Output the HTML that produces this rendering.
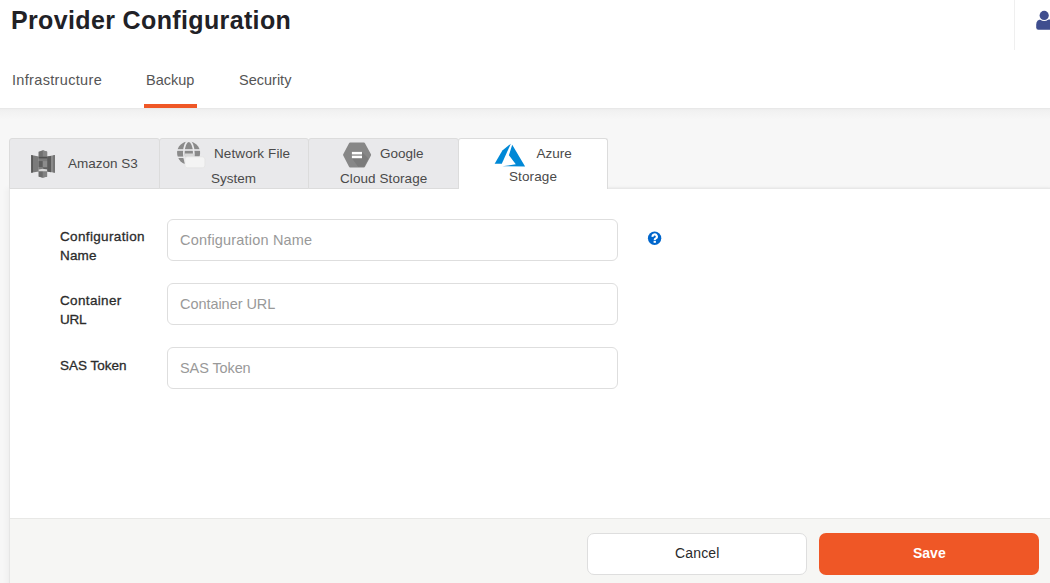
<!DOCTYPE html>
<html><head><meta charset="utf-8">
<style>
*{margin:0;padding:0;box-sizing:border-box}
html,body{width:1050px;height:583px;overflow:hidden;background:#f7f7f7;font-family:"Liberation Sans",sans-serif}
.a{position:absolute;white-space:nowrap}
#hdr{position:absolute;left:0;top:0;width:1050px;height:108px;background:#fff}
#hdr2{position:absolute;left:0;top:108px;width:1050px;height:12px;background:linear-gradient(#e4e4e4 0px,#ececec 1px,#f0f0f0 2px,#f3f3f3 5px,#f7f7f7 12px)}
.title{left:11px;top:5px;font-size:25px;letter-spacing:0.36px;font-weight:bold;color:#212126;line-height:30px}
.nav{top:72px;font-size:14.5px;color:#555;line-height:17px}
.uline{position:absolute;left:144px;top:104px;width:53px;height:4px;background:#ef5726}
.divider{position:absolute;left:1014px;top:0;width:1px;height:50px;background:#efefef}
.tab{position:absolute;top:138px;height:51px;background:#e9e9eb;border:1px solid #dcdcdc;border-radius:3px 3px 0 0}
.tab.act{background:#fff;border-bottom:none}
.tt{font-size:13.5px;color:#4a4a4a;line-height:16px}
#panel{position:absolute;left:9px;top:188px;width:1045px;height:400px;background:#fff;border-left:1px solid #e6e6e6;border-top:1px solid #e8e8e8;box-shadow:-3px 0 5px rgba(0,0,0,0.03),0 -1px 1px rgba(0,0,0,0.025)}
#foot{position:absolute;left:10px;top:518px;width:1040px;height:65px;background:#f6f6f4;border-top:1px solid #e8e8e6}
.lbl{font-size:13.5px;color:#2b2b2b;line-height:19px;letter-spacing:0.35px;-webkit-text-stroke:0.3px #2b2b2b}
.inp{position:absolute;left:167px;width:451px;height:42px;border:1px solid #dedede;border-radius:6px;background:#fff}
.ph{font-size:14.5px;color:#999;line-height:17px;letter-spacing:0.19px}
.btn{position:absolute;top:533px;height:42px;border-radius:7px}
</style></head>
<body>
<div id="hdr"></div><div id="hdr2"></div>
<div class="a title">Provider Configuration</div>
<div class="divider"></div>
<svg class="a" style="left:1030px;top:5px" width="20" height="30" viewBox="0 0 20 30">
  <path d="M6.2 22.6 L6.2 19.8 Q6.2 14.5 11.5 14.5 L25 14.5 L25 24.8 L8.4 24.8 Q6.2 24.8 6.2 22.6 Z" fill="#3f4e8f"/>
  <circle cx="14.2" cy="10.4" r="5.7" fill="#fff"/>
  <circle cx="14.2" cy="10.4" r="4.6" fill="#3f4e8f"/>
</svg>
<div class="a nav" style="left:12px;letter-spacing:0.33px">Infrastructure</div>
<div class="a nav" style="left:146px">Backup</div>
<div class="a nav" style="left:239px">Security</div>
<div class="uline"></div>

<div id="panel"></div>
<div class="tab" style="left:9px;width:151px"></div>
<div class="tab" style="left:159px;width:150px"></div>
<div class="tab" style="left:308px;width:151px"></div>
<div class="tab act" style="left:458px;width:150px"></div>

<!-- tab contents -->
<svg class="a" style="left:29px;top:148px" width="28" height="32" viewBox="0 0 28 32">
  <polygon points="2.2,7.1 9.8,8.6 9.8,23.6 2.2,24.7" fill="#7b7b7b"/>
  <polygon points="2.2,7.1 3.9,7.4 3.9,24.5 2.2,24.7" fill="#555"/>
  <polygon points="18.1,8.6 25.8,7.1 25.8,24.7 18.1,23.6" fill="#8a8a8a"/>
  <polygon points="18.1,8.6 22,7.9 22,24.2 18.1,23.6" fill="#5c5c5c"/>
  <polygon points="24.4,7.3 25.8,7.1 25.8,24.7 24.4,24.5" fill="#6a6a6a"/>
  <rect x="9.7" y="3.8" width="8.4" height="25" fill="#7c7c7c"/>
  <polygon points="9.7,3.8 13.8,2.2 18.1,3.8 18.1,8.8 9.7,8.8" fill="#707070"/>
  <polygon points="13.8,2.2 18.1,3.8 18.1,8.8 13.8,8.8" fill="#858585"/>
  <rect x="9.7" y="8.8" width="8.4" height="1.6" fill="#505050"/>
  <rect x="9.7" y="13.1" width="4.1" height="5.9" fill="#5e5e5e"/>
  <rect x="13.8" y="13.1" width="4.3" height="5.9" fill="#8c8c8c"/>
  <rect x="13.8" y="19.6" width="4.3" height="1.1" fill="#555"/>
  <polygon points="9.7,22.8 13.8,22.8 13.8,29.9 9.7,28.4" fill="#6b6b6b"/>
  <polygon points="13.8,22.8 18.1,22.8 18.1,28.4 13.8,29.9" fill="#828282"/>
  <polygon points="9.7,21.6 13.8,20.8 18.1,21.6 18.1,23.3 9.7,23.3" fill="#d6d6d6"/>
</svg>
<div class="a tt" style="left:68px;top:156px">Amazon S3</div>

<svg class="a" style="left:174px;top:139px" width="34" height="32" viewBox="0 0 34 32">
  <circle cx="14.6" cy="14" r="11.5" fill="#8a8a8a"/>
  <rect x="2" y="10.2" width="26" height="1.6" fill="#e9e9eb"/>
  <rect x="2" y="17.6" width="26" height="1.4" fill="#e9e9eb"/>
  <ellipse cx="14.8" cy="14" rx="5.0" ry="11.8" fill="none" stroke="#e9e9eb" stroke-width="1.7"/>
  <rect x="11" y="14.5" width="9.5" height="3.5" fill="#d8d8d8"/>
  <rect x="10.9" y="17.8" width="20" height="11" rx="2.6" fill="#f4f4f4" stroke="#e2e2e2" stroke-width="0.7"/>
</svg>
<div class="a tt" style="left:214px;top:146px;letter-spacing:0.1px">Network File</div>
<div class="a tt" style="left:211px;top:171px">System</div>

<svg class="a" style="left:339px;top:139px" width="36" height="32" viewBox="0 0 36 32">
  <defs><clipPath id="hx"><polygon points="4.9,15.9 10.9,4.4 25.1,4.4 31.3,15.9 25.1,27.7 10.9,27.7" stroke="#000" stroke-width="2.4" stroke-linejoin="round"/></clipPath></defs>
  <polygon points="5.3,15.9 11.1,4.8 24.9,4.8 30.9,15.9 24.9,27.3 11.1,27.3" fill="#878787" stroke="#878787" stroke-width="2.4" stroke-linejoin="round"/>
  <g clip-path="url(#hx)"><polygon points="23,12.9 40,29.9 40,40 28,40 12.9,19.2 23,19.2" fill="#7b7b7b"/></g>
  <rect x="12.9" y="12.9" width="10.1" height="2.5" fill="#fff"/>
  <rect x="12.9" y="16.7" width="10.1" height="2.5" fill="#fff"/>
</svg>
<div class="a tt" style="left:380px;top:146px">Google</div>
<div class="a tt" style="left:340px;top:171px;letter-spacing:0.08px">Cloud Storage</div>

<svg class="a" style="left:490px;top:139px" width="40" height="32" viewBox="0 0 40 32">
  <polygon points="20.85,4.66 12.35,11.52 4.66,24.69 11.8,24.69" fill="#0088d6"/>
  <polygon points="22.2,5.76 18.93,16.19 25.79,25.35 12.35,27.16 35.12,27.43" fill="#0088d6"/>
</svg>
<div class="a tt" style="left:536.5px;top:146px">Azure</div>
<div class="a tt" style="left:509px;top:169px;letter-spacing:0.12px">Storage</div>

<div class="a lbl" style="left:60px;top:227px">Configuration<br><span style="letter-spacing:0.15px">Name</span></div>
<div class="a lbl" style="left:60px;top:291px">Container<br><span style="letter-spacing:-0.3px">URL</span></div>
<div class="a lbl" style="left:60px;top:356px;letter-spacing:0">SAS Token</div>

<div class="inp" style="top:219px"></div>
<div class="inp" style="top:283px"></div>
<div class="inp" style="top:347px"></div>
<div class="a ph" style="left:180px;top:232px">Configuration Name</div>
<div class="a ph" style="left:180px;top:296px;letter-spacing:-0.05px">Container URL</div>
<div class="a ph" style="left:180px;top:360px;letter-spacing:-0.1px">SAS Token</div>

<svg class="a" style="left:647px;top:231px" width="16" height="16" viewBox="0 0 16 16">
  <circle cx="7.6" cy="7.3" r="6.7" fill="#0066cc"/>
  <path d="M5.6 5.9 A2.15 2.15 0 1 1 8.9 7.4 Q7.7 8 7.7 9.1" fill="none" stroke="#fff" stroke-width="2.1"/>
  <rect x="6.6" y="9.8" width="2.3" height="2" fill="#fff"/>
</svg>

<div id="foot"></div>
<div class="btn" style="left:587px;width:220px;background:#fff;border:1px solid #dedede"></div>
<div class="btn" style="left:819px;width:220px;background:#ef5726"></div>
<div class="a" style="left:675px;top:545px;font-size:14px;color:#2a2a2a;letter-spacing:0.15px;line-height:16px">Cancel</div>
<div class="a" style="left:913px;top:545px;font-size:14px;font-weight:bold;color:#fff;line-height:16px">Save</div>
</body></html>
